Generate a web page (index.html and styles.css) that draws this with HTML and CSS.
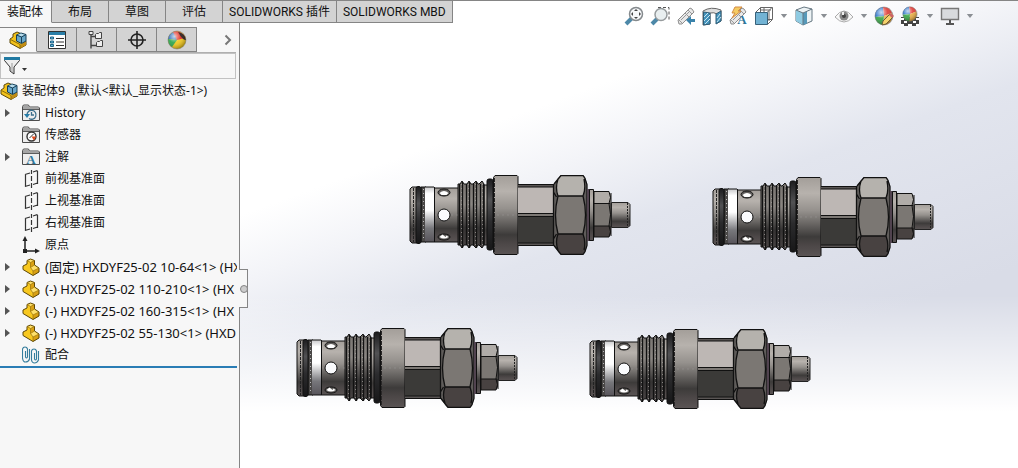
FILE: index.html
```html
<!DOCTYPE html>
<html lang="zh-cn">
	<head>
		<meta charset="utf-8" />
		<title>装配体9</title>
		<link rel="stylesheet" href="styles.css">
	</head>

	<body>
		<svg class="defs" aria-hidden="true">
			<defs>
				<linearGradient id="metal" x1="0" y1="0" x2="0" y2="1">
					<stop offset="0" stop-color="#a39e99" />
					<stop offset="0.2" stop-color="#b7b2ad" />
					<stop offset="0.42" stop-color="#95918d" />
					<stop offset="0.75" stop-color="#3d3b3a" />
					<stop offset="0.86" stop-color="#4c4747" />
					<stop offset="1" stop-color="#5a5454" />
				</linearGradient>
				<linearGradient id="chrome" x1="0" y1="0" x2="0" y2="1">
					<stop offset="0" stop-color="#c8c8ca" />
					<stop offset="0.12" stop-color="#fff" />
					<stop offset="0.42" stop-color="#fff" />
					<stop offset="0.75" stop-color="#77777b" />
					<stop offset="1" stop-color="#57545a" />
				</linearGradient>
				<linearGradient id="rubber" x1="0" y1="0" x2="0" y2="1">
					<stop offset="0" stop-color="#1c1c1e" />
					<stop offset="0.3" stop-color="#525254" />
					<stop offset="0.6" stop-color="#2b2b2d" />
					<stop offset="1" stop-color="#171718" />
				</linearGradient>
				<linearGradient id="thread" x1="0" y1="0" x2="0" y2="1">
					<stop offset="0" stop-color="#77736f" />
					<stop offset="0.35" stop-color="#8a8682" />
					<stop offset="0.7" stop-color="#353333" />
					<stop offset="1" stop-color="#4a4545" />
				</linearGradient>
				<radialGradient id="gloss" cx="0.35" cy="0.3" r="0.7">
					<stop offset="0" stop-color="#fff" stop-opacity="0.75" />
					<stop offset="0.5" stop-color="#fff" stop-opacity="0.1" />
					<stop offset="1" stop-color="#000" stop-opacity="0.3" />
				</radialGradient>
			</defs>

			<!-- cartridge valve -->
			<symbol id="valve" viewBox="0 0 222 80">
				<g stroke="#111" stroke-width="1">
					<path d="M1 14l2-2h5v56H3l-2-2z" fill="url(#metal)" />
					<path d="M12 12h5v55h-5z" fill="#4a4847" />
					<rect x="7" y="11.500" width="5" height="57" rx="2" fill="url(#rubber)" />
					<path d="M25 13h25v54H25z" fill="url(#metal)" />
					<path d="M16 12h9v55h-9z" fill="url(#chrome)" stroke="none" />
					<path d="M16 12h9M16 67h9M25.500 12v55" fill="none" />
					<path d="M75 10h4v60h-4z" fill="url(#metal)" />
					<path d="M49 9l2 0 2-3 2 3h3l2-3 2 3h2l3-3 2 3h1l3-3 2 3v61l-2 3-3-3h-1l-2 3-3-3h-2l-2 3-2-3h-3l-2 3-2-3h-2z" fill="url(#thread)" />
					<rect x="78" y="4" width="6" height="71" rx="2" fill="url(#rubber)" />
					<path d="M86 .500h22l1 1v77l-1 1H86l-1.500-2V2.500z" fill="url(#metal)" />
				</g>
				<path d="M4.500 13v54" stroke="#222" stroke-dasharray="3 1" />
				<path d="M14.500 14v52" stroke="#bbb" stroke-dasharray="1 3" />
				<path d="M50.500 9v61M53.500 7v66M57.500 9v61M60.500 7v66M64.500 9v61M67.500 7v66M71.500 9v61M74.500 9v61" stroke="#111" stroke-width="1.300" fill="none" />
				<path d="M52.500 9v62M59.500 9v62M66.500 9v62M73.500 9v62" stroke="#aaa6a3" stroke-dasharray="1 3" fill="none" opacity="0.700" />
				<path d="M85.500 3v74" stroke="#292727" stroke-dasharray="4 1" />
				<path d="M88 40h20M26 40h3M42 40h7" stroke="#aaa" stroke-dasharray="2 3" opacity="0.300" />
				<g stroke="#111">
					<circle cx="35" cy="40" r="6" fill="#fafbfd" />
					<ellipse cx="35" cy="17.500" rx="6" ry="3.500" fill="#625f5d" />
					<ellipse cx="35" cy="62" rx="6" ry="3" fill="#625f5d" />
				</g>
				<path d="M30.500 18q4.500-4 9 0l-2 2h-5zM30.500 62q4.500 3 9 0l-2-1.500-1 1.500-3-2.500z" fill="#fff" />
				<path d="M109 9h36v62h-36z" fill="#5a5655" />
				<path d="M109 12h36v26h-36z" fill="#bdb7b4" />
				<path d="M109 38h36v4h-36z" fill="#7c7874" />
				<path d="M109 42h36v26h-36z" fill="#3b3a38" />
				<path d="M109 9.500h36M109 12h36M109 38.500h36M109 41.500h36M109 68h36M109 70.500h36" stroke="#111" />
				<path d="M145 9l5-7 2-2h22l2 2 2 7v62l-2 7-2 1h-22l-2-1-5-7z" fill="#5f5c5a" />
				<path d="M149 4l3-4h22l2 4q1 11-2 17h-25q-4-8 0-17z" fill="#b5b2ad" />
				<path d="M149 21h25q5 19 0 38h-25q-5-19 0-38z" fill="#7b7773" />
				<path d="M149 59h25q3 8 2 17l-2 3h-22l-3-4q-3-8 0-16z" fill="#484241" />
				<path d="M144.500 9v62M145 9l7-8.500h22l2 3 2 6v61l-2 6-2 3h-22l-7-9M149 21h25M149 59h25M149 4q-3 9 0 17-5 19 0 38-3 8 0 16M175 4q2 10-1 17 5 19 0 38 3 8 1 16M144.500 17l3 5M144.500 64l3-5" fill="none" stroke="#111" stroke-width="1.300" />
				<path d="M178 14h3v52h-3z" fill="#51434f" />
				<path d="M180.500 14.500h4v51h-4z" fill="url(#metal)" stroke="#111" />
				<path d="M185 17h15l2 2v10h-17z" fill="#b0aca8" />
				<path d="M185 28h17v23h-17z" fill="#7b7773" />
				<path d="M185 51h17v8l-2 3h-15z" fill="#484241" />
				<path d="M185 16.500h15q3 6 0 12 3 11 0 22.500 3 6 0 11h-15zM185 28.500h16M185 51h16M202 18v43" fill="none" stroke="#111" />
				<path d="M202.500 27.500H219l2 2v21l-2 2h-16.500z" fill="url(#metal)" stroke="#222" />
				<path d="M218.500 28v24" stroke="#222" stroke-dasharray="2 1" />
			</symbol>

			<!-- tree icons -->
			<symbol id="assembly" viewBox="0 0 18 18">
				<path d="M1 8l3-2V3l4-2 5 2v6l4 1v4l-6 3.500L1 12z" fill="#f3c21c" stroke="#5c4a0c" />
				<path d="M11 14l6-4v4l-6 3.500z" fill="#c28d13" />
				<path d="M1.500 8.500L11 13.500V17" fill="none" stroke="#8a6d0c" />
				<path d="M7.500 4L12 2l5 1.500V10l-4.500 2.500-5-2.500z" fill="#69a7c9" stroke="#173f57" />
				<path d="M8.500 4l3.500-1.500 4 1.500-3.500 1.500z" fill="#b8dcec" />
				<path d="M7.500 4l5 2L17 3.500M12.500 6v6" fill="none" stroke="#173f57" />
			</symbol>
			<symbol id="part" viewBox="0 0 18 18">
				<path d="M1 8l4-2V2.500L8.500 1l4 1.500V7L17 10v4l-6 3.500-10-6z" fill="#f8c81f" />
				<path d="M8.500 4.500l4-2V7l-4 2.500zM11 13l6-3v4l-6 3.500z" fill="#d9a013" />
				<path d="M5.500 2.500l3-1.500 3.500 1.500-3.500 2zM8.500 9.500l4-2.500 4.500 3-6 3z" fill="#ffe06a" />
				<path d="M1 8l4-2V2.500L8.500 1l4 1.500V7L17 10v4l-6 3.500-10-6z" fill="none" stroke="#5c4708" />
				<path d="M5 2.500l3.500 2v5L11 13v4M11 13l6-3M8.500 4.500l4-2M8.500 9.500l4-2.500" fill="none" stroke="#a07a10" stroke-width="0.800" />
			</symbol>
			<symbol id="folder" viewBox="0 0 18 18">
				<path d="M.500 16.500v-14l1-1.500h5l1 2h9l1 1v12.500z" fill="#eee" stroke="#4c4c4c" />
				<path d="M1 2h6l1 2h9v1H1z" fill="#a5a5a5" />
				<path d="M1 5.500h16" stroke="#5c5c5c" />
			</symbol>
			<symbol id="plane" viewBox="0 0 18 18">
				<path d="M3.500 4v13M15.500 1v13M3 4.500l5-1.500M11 2l4.500-1.500M3 16.500L8 15M11 14.500l4.500-1.500M9.500 0v4M9.500 6v5M9.500 13v5" fill="none" stroke="#333" stroke-width="1.200" />
			</symbol>
			<symbol id="ball" viewBox="0 0 20 20">
				<path d="M10 10L1 11A9 9 0 0 1 9 1z" fill="#2870c8" />
				<path d="M10 10L9 1a9 9 0 0 1 9 6z" fill="#de3a35" />
				<path d="M10 10l8-3a9 9 0 0 1-9 12z" fill="#e9ad44" />
				<path d="M10 10L9 19A9 9 0 0 1 1 11z" fill="#36a343" />
				<circle cx="10" cy="10" r="9" fill="url(#gloss)" stroke="#777" stroke-width="0.500" />
			</symbol>
			<symbol id="scope" viewBox="0 0 20 20">
				<path d="M2 14L12 4l2-2 2 1 2 3-2 2L6 18H3z" fill="#e8e8e8" stroke="#8d8d8d" />
				<path d="M12 4l4 4M9 7l4 4M3 14l3 3M5 14l8-8" fill="none" stroke="#999" />
			</symbol>
		</svg>

		<div class="app">
			<nav class="ribbon">
				<button class="ribbon-tab active">装配体</button>
				<button class="ribbon-tab">布局</button>
				<button class="ribbon-tab">草图</button>
				<button class="ribbon-tab">评估</button>
				<button class="ribbon-tab">SOLIDWORKS 插件</button>
				<button class="ribbon-tab">SOLIDWORKS MBD</button>
			</nav>

			<div class="work">
				<aside class="panel">
					<div class="panel-tabs">
						<button class="panel-tab active" aria-label="设计树"><svg width="18" height="18"><use href="#assembly" /></svg></button>
						<button class="panel-tab" aria-label="属性">
							<svg width="18" height="18" viewBox="0 0 18 18"><path d="M.500.500h17v17H.500z" fill="#fff" stroke="#333" /><path d="M1 1h16v3H1z" fill="#2b7fa8" /><path d="M8 7.500h8M8 11h8M8 14.500h8" stroke="#333" stroke-width="1.200" /><path d="M2.500 6h3v2h-3zM2.500 10h3v2h-3zM2.500 13.500h3v2h-3z" fill="#65b3d8" stroke="#1d6387" /></svg>
						</button>
						<button class="panel-tab" aria-label="配置">
							<svg width="18" height="18" viewBox="0 0 18 18" fill="#eee" stroke="#444"><path d="M3 2.500v15M3 5.500h5M3 14.500h5" fill="none" stroke-width="1.400" /><path d="M1 .500h4v3H1zM7.500 3.500l1-1h2l1-1h2v6h-6zM8.500 11.500l1-1h2l1-1h2v6h-6z" /></svg>
						</button>
						<button class="panel-tab" aria-label="尺寸">
							<svg width="18" height="18" viewBox="0 0 18 18" fill="none" stroke="#222" stroke-width="1.600"><circle cx="9" cy="9" r="6" /><path d="M9 0v18M0 9h18" /></svg>
						</button>
						<button class="panel-tab" aria-label="外观">
							<svg width="20" height="20" viewBox="0 0 20 20"><circle cx="10" cy="10" r="9" fill="#f1c719" /><path d="M10 10L1 9a9 9 0 0 1 6-7z" fill="#1e63b4" /><path d="M10 10L1 9a9 9 0 0 0 4 8z" fill="#28a448" /><path d="M10 10L6 2a9 9 0 0 1 12 6z" fill="#e02b20" /><path d="M11 2q7 1 8 8-3 1-8-8z" fill="#261714" /><circle cx="10" cy="10" r="9" fill="url(#gloss)" stroke="#777" stroke-width="0.500" /></svg>
						</button>
						<button class="more" aria-label="更多"><svg width="8" height="12" viewBox="0 0 8 12"><path d="M1.500 1.500L6 6l-4.500 4.500" fill="none" stroke="#777" stroke-width="2" /></svg></button>
					</div>

					<div class="filter">
						<button class="filter-btn" aria-label="过滤器">
							<svg width="24" height="20" viewBox="0 0 24 20"><path d="M1.500 2.500h15v2L11 11v7l-4-3v-4L1.500 4.500z" fill="#eee" stroke="#333" /><path d="M1 1h16v3H1z" fill="#217aa3" /><path d="M9 7v9" stroke="#999" /><path d="M19 12h5l-2.500 3z" fill="#333" /></svg>
						</button>
						<input class="filter-text" type="text" aria-label="过滤">
					</div>

					<div class="root"><svg width="18" height="18"><use href="#assembly" /></svg><span>装配体9&nbsp;&nbsp; (默认&lt;默认_显示状态-1&gt;)</span></div>
					<ul class="tree">
						<li><button class="twist" aria-label="展开"></button><svg width="18" height="18"><use href="#folder" /><path d="M5 11a4.500 4.500 0 1 1 2 3.500M9.500 8v3H12" fill="none" stroke="#3b6f8c" stroke-width="1.300" /><path d="M2 10h6l-3 4z" fill="#287da8" /></svg><span>History</span></li>
						<li><svg width="18" height="18"><use href="#folder" /><circle cx="9.500" cy="10.500" r="4.500" fill="#fff" stroke="#333" stroke-width="1.400" /><path d="M9.500 10.500h4.500l-2 4z" fill="#e44a1c" /><path d="M7.500 12l4-4" stroke="#333" /></svg><span>传感器</span></li>
						<li><button class="twist" aria-label="展开"></button><svg width="18" height="18"><use href="#folder" /><text class="serif-a" x="9" y="16" text-anchor="middle">A</text></svg><span>注解</span></li>
						<li><svg width="18" height="18"><use href="#plane" /></svg><span>前视基准面</span></li>
						<li><svg width="18" height="18"><use href="#plane" /></svg><span>上视基准面</span></li>
						<li><svg width="18" height="18"><use href="#plane" /></svg><span>右视基准面</span></li>
						<li><svg width="18" height="18" viewBox="0 0 18 18"><path d="M3 3v12h12" fill="none" stroke="#222" stroke-width="1.500" /><path d="M3 0l2.500 5h-5zM18 15l-5 2.500v-5zM1 13h4v4H1z" fill="#222" /></svg><span>原点</span></li>
						<li class="comp"><button class="twist" aria-label="展开"></button><svg width="18" height="18"><use href="#part" /></svg><span>(固定) HXDYF25-02 10-64&lt;1&gt; (HX</span></li>
						<li class="comp"><button class="twist" aria-label="展开"></button><svg width="18" height="18"><use href="#part" /></svg><span>(-) HXDYF25-02 110-210&lt;1&gt; (HX</span></li>
						<li class="comp"><button class="twist" aria-label="展开"></button><svg width="18" height="18"><use href="#part" /></svg><span>(-) HXDYF25-02 160-315&lt;1&gt; (HX</span></li>
						<li class="comp"><button class="twist" aria-label="展开"></button><svg width="18" height="18"><use href="#part" /></svg><span>(-) HXDYF25-02 55-130&lt;1&gt; (HXD</span></li>
						<li><svg width="18" height="18" viewBox="0 0 18 18"><path d="M3.500 5v6q1 2 2 0V3q-.500-2-2.500-2T.500 3v9q.500 4 3 4 3 0 4-3V3M12.500 7v6q1 2 2 0V5q-.500-2-2.500-2T9.500 5v9q.500 3 3 3t4-3V5" fill="none" stroke="#357d9d" stroke-width="1.100" /></svg><span>配合</span></li>
					</ul>
					<button class="handle" aria-label="折叠"></button>
				</aside>

				<main class="viewport">
					<svg class="valve v1"><use href="#valve" /></svg>
					<svg class="valve v2"><use href="#valve" /></svg>
					<svg class="valve v3"><use href="#valve" /></svg>
					<svg class="valve v4"><use href="#valve" /></svg>
				</main>
			</div>

			<div class="headsup">
				<button aria-label="整屏显示全图"><svg width="20" height="20" viewBox="0 0 20 20"><path d="M2 18l6-6" stroke="#4d88a8" stroke-width="4" /><circle cx="12" cy="8" r="6.500" fill="#f6f8fa" stroke="#858a8d" stroke-width="1.500" /><path d="M12 3l2 2h-4zM12 13l2-2h-4zM7 8l2-2v4zM17 8l-2-2v4z" fill="#444" /></svg></button>
				<button aria-label="局部放大"><svg width="20" height="20" viewBox="0 0 20 20"><path d="M8 1.500h11v13" fill="none" stroke="#555" stroke-dasharray="3 2" /><path d="M2 18l5-5" stroke="#4d88a8" stroke-width="4" /><circle cx="11" cy="8.500" r="6" fill="#e9eff0" stroke="#969b9d" stroke-width="1.500" /></svg></button>
				<button aria-label="上一视图"><svg width="20" height="20" viewBox="0 0 20 20"><use href="#scope" /><path d="M10 14l5-4v3h4v3h-4v3z" fill="#3a82aa" /></svg></button>
				<button aria-label="剖面视图"><svg width="20" height="20" viewBox="0 0 20 20"><path d="M1 5q8-5 18-1v11l-4 2V8q-3-2-7-1v11l-7 1z" fill="#ddd" stroke="#666" /><path d="M1.500 6l6.500 1v11l-6.500 1zM14 8l5-3v10l-5 3z" fill="#4493bb" stroke="#305c75" /><path d="M2 11l4-4M2 15l6-6M3 18l5-5M15 12l3-4M15 16l4-5" stroke="#cae6f2" /></svg></button>
				<button aria-label="动态注解视图"><svg width="20" height="20" viewBox="0 0 20 20"><use href="#scope" /><path d="M7 1h7l-4 4h3L4 12l3-5H4z" fill="#f4cb62" stroke="#d38b45" /><text class="serif-a" x="14" y="18" text-anchor="middle">A</text></svg></button>
				<button aria-label="视图定向"><svg width="20" height="20" viewBox="0 0 20 20"><path d="M1.500 6.500l5-5h12v12l-5 5M6.500 1.500v5M13 6.500l5-5M10 1v5M18 13.500h-5M15 5v10M7 4h10" fill="none" stroke="#666" /><path d="M1.500 6.500h12v12h-12z" fill="#72b3d4" stroke="#38627a" /></svg></button>
				<button class="caret" aria-label="视图定向选项"></button>
				<button aria-label="显示样式"><svg width="20" height="20" viewBox="0 0 20 20"><path d="M2 4l8-3 8 2v12l-9 4-7-4z" fill="#edf3f5" stroke="#657681" /><path d="M2 4l7 3v12l-7-4z" fill="#8fcbe2" /><path d="M9 7l4-1.500v12L9 19z" fill="#5799b9" /><path d="M2 4l7 3 9-4M9 7v12" fill="none" stroke="#657681" /></svg></button>
				<button class="caret" aria-label="显示样式选项"></button>
				<button aria-label="隐藏/显示"><svg width="20" height="20" viewBox="0 0 20 20"><path d="M1 11q9-12 18 0-9 10-18 0z" fill="#f8f8f8" stroke="#aaa" /><circle cx="10" cy="10" r="4.500" fill="#888" /><circle cx="10" cy="10" r="2" fill="#444" /><path d="M9 6v3" stroke="#eee" stroke-width="2" /></svg></button>
				<button class="caret" aria-label="隐藏选项"></button>
				<button aria-label="编辑外观"><svg width="20" height="20" viewBox="0 0 20 20"><use href="#ball" /><path d="M8 19l1-4 7-7 3 3-7 7z" fill="#f6d36c" stroke="#6c5a38" /><path d="M15 9l2-2 3 3-2 2z" fill="#cb6464" /></svg></button>
				<button aria-label="应用布景"><svg width="20" height="20" viewBox="0 0 20 20"><path d="M1 11h18v9H1z" fill="#444" /><path d="M1 13h3M4 16h3M1 19h3M8 19h4M16 13h3M13 16h3M16 19h3" stroke="#fff" stroke-width="2" /><svg x="2" y="0" width="16" height="16"><use href="#ball" /></svg></svg></button>
				<button class="caret" aria-label="布景选项"></button>
				<button aria-label="视图设定"><svg width="20" height="20" viewBox="0 0 20 20"><path d="M1.500 2.500h17v11h-17z" fill="#d8dadd" stroke="#777" stroke-width="1.400" /><path d="M10 14v4M6 18h8" stroke="#555" stroke-width="2" /></svg></button>
				<button class="caret" aria-label="视图设定选项"></button>
			</div>
		</div>
	</body>
</html>
```

FILE: styles.css
```css
*{
	padding: 0;
	margin: 0;
	box-sizing: border-box;
}
body{
	font: 12px/22px "Noto Sans", "Noto Sans CJK SC", sans-serif;
	color: #111;
	overflow: hidden;
}
button{
	border: 0;
	background: none;
	font: inherit;
	color: inherit;
}
svg{
	display: block;
	flex: none;
}
.defs{
	position: absolute;
	width: 0;
	height: 0;
}
.app{
	position: relative;
	display: flex;
	flex-direction: column;
	min-height: 100vh;
	border-top: 1px solid #858585;
	background:
		linear-gradient(to bottom, rgba(255,255,255,0) 63%, #fff 88%),
		linear-gradient(160deg, #fff 36%, #f3f4f8 44%, #e2e5ee 54%, #d9dce7 76%);
}
/* command tabs */
.ribbon{
	display: flex;
	height: 22px;
	font-family: Roboto, "Noto Sans CJK SC", sans-serif;
}
.ribbon-tab{
	padding: 0 6px;
	line-height: 20px;
	border-right: 1px solid #858585;
	border-bottom: 1px solid #858585;
	background: #d3d3d3;
	white-space: nowrap;
}
.ribbon-tab:nth-child(-n+4){
	padding: 0 16px;
}
.ribbon-tab.active{
	padding: 0 8px 0 7px;
	border-bottom-color: #f7f7f7;
	background: #f7f7f7;
}
.work{
	display: flex;
	flex: 1;
}
/* feature tree */
.panel{
	position: relative;
	width: 240px;
	flex: none;
	padding-top: 4px;
	border-right: 1px solid #858585;
	background: #f7f7f7;
}
.panel-tabs{
	display: flex;
	height: 26px;
	margin-right: 3px;
	border-bottom: 1px solid #b0b0b0;
}
.panel-tab{
	display: flex;
	align-items: center;
	justify-content: center;
	width: 40px;
	border: 1px solid #858585;
	border-left: 0;
	background: #d3d3d3;
}
.panel-tab.active{
	width: 37px;
	border-bottom-color: #f7f7f7;
	background: #f7f7f7;
}
.more{
	margin-left: auto;
	padding: 0 4px;
}
.filter{
	display: flex;
	align-items: center;
	height: 26px;
	margin: 0 3px 1px 0;
	padding-left: 2px;
	border: 1px solid #c2c2c2;
}
.filter-text{
	flex: 1;
	min-width: 0;
	border: 0;
	outline: 0;
	background: none;
}
.root{
	display: flex;
	align-items: center;
	gap: 4px;
	height: 22px;
}
.tree{
	list-style: none;
	margin-right: 2px;
	border-bottom: 2px solid #2a7db5;
}
.tree li{
	display: flex;
	align-items: center;
	gap: 5px;
	height: 22px;
	padding-left: 22px;
	overflow: hidden;
	white-space: nowrap;
}
.tree .comp{
	font-size: 13px;
	line-height: 20px;
}
.twist{
	flex: none;
	width: 5px;
	height: 8px;
	margin: 0 7px 0 -17px;
	background: #555;
	clip-path: polygon(0 0, 100% 50%, 0 100%);
}
.serif-a{
	font: bold 13px "Liberation Serif", serif;
	fill: #2f769a;
}
.handle{
	position: absolute;
	left: 239px;
	top: 246px;
	width: 9px;
	height: 39px;
	border: 1px solid #858585;
	border-left: 0;
	background: #f7f7f7;
}
.handle::before{
	content: "";
	display: block;
	width: 6px;
	height: 6px;
	margin-left: 1px;
	border: 1px solid #858585;
	border-radius: 50%;
	background: #ccc;
}
/* view toolbar */
.headsup{
	position: absolute;
	top: 5px;
	right: 44px;
	display: flex;
	align-items: center;
	gap: 6px;
}
.caret{
	width: 8px;
	height: 4px;
	background: #8b8f94;
	clip-path: polygon(10% 0, 90% 0, 50% 100%);
}
/* model space */
.viewport{
	position: relative;
	flex: 1;
	overflow: hidden;
}
.valve{
	position: absolute;
	width: 222px;
	height: 80px;
}
.v1{
	left: 169px;
	top: 152px;
}
.v2{
	left: 472px;
	top: 154px;
}
.v3{
	left: 56px;
	top: 305px;
}
.v4{
	left: 349px;
	top: 306px;
}
```
